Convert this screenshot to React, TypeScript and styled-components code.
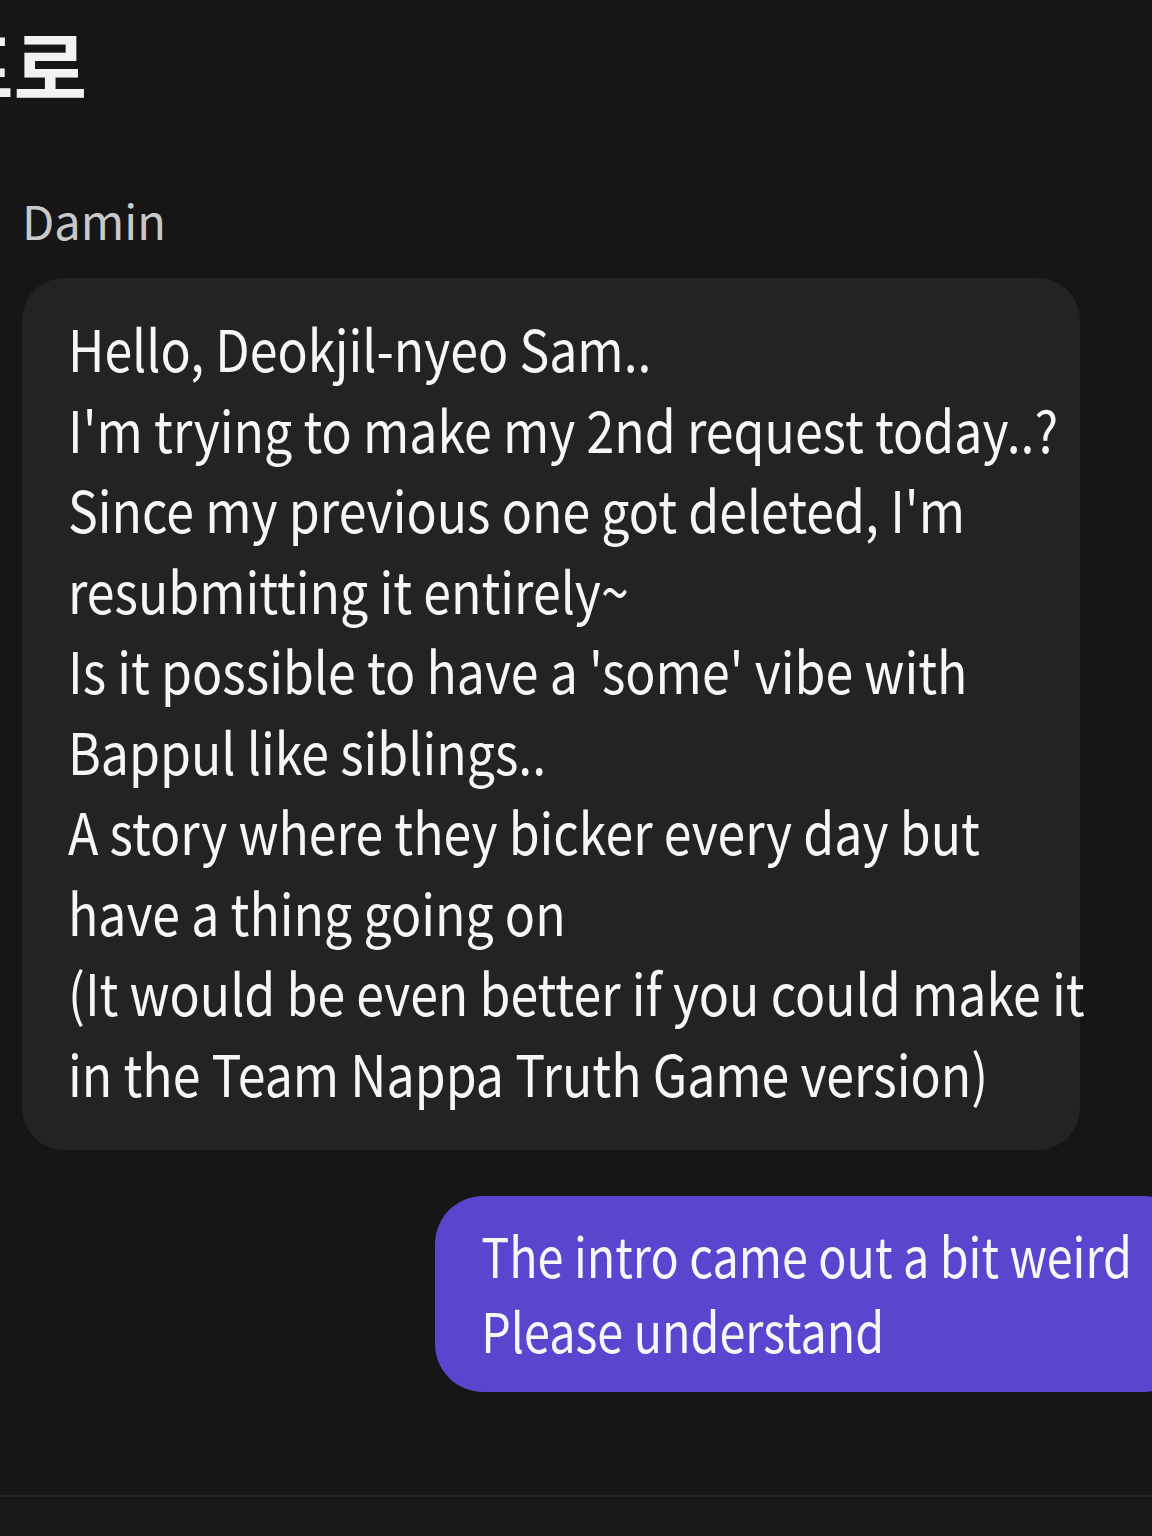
import { createGlobalStyle } from "styled-components";
import styled from "styled-components";

const GlobalStyle = createGlobalStyle`
  html, body {
    margin: 0;
    padding: 0;
    background: #161616;
  }
  body {
    font-family: "Noto Sans CJK KR", "Noto Sans", sans-serif;
    overflow: hidden;
  }
`;

type BubbleTone = "received" | "sent";

const receivedLines = [
  "Hello, Deokjil-nyeo Sam..",
  "I'm trying to make my 2nd request today..?",
  "Since my previous one got deleted, I'm",
  "resubmitting it entirely~",
  "Is it possible to have a 'some' vibe with",
  "Bappul like siblings..",
  "A story where they bicker every day but",
  "have a thing going on",
  "(It would be even better if you could make it",
  "in the Team Nappa Truth Game version)",
];

const sentLines = ["The intro came out a bit weird", "Please understand"];

const App = () => (
  <>
    <GlobalStyle />
    <Page>
      <Header>
        <Title>프로</Title>
      </Header>
      <Thread>
        <SenderName>Damin</SenderName>
        <Row $tone="received">
          <Bubble $tone="received">
            {receivedLines.map(line => (
              <Line
                key={line}
                $tone="received"
              >
                {line}
              </Line>
            ))}
          </Bubble>
        </Row>
        <Row $tone="sent">
          <Bubble $tone="sent">
            {sentLines.map(line => (
              <Line
                key={line}
                $tone="sent"
              >
                {line}
              </Line>
            ))}
          </Bubble>
        </Row>
      </Thread>
      <Composer />
    </Page>
  </>
);

const Page = styled.div`
  display: flex;
  flex-direction: column;
  width: 1152px;
  height: 1536px;
  overflow: hidden;
  background: #161616;
  color: #f4f4f4;
`;

const Header = styled.header`
  display: flex;
  height: 130px;
  padding-top: 15px;
  box-sizing: border-box;
`;

// the screen title is scrolled half out of view on the left
const Title = styled.h1`
  margin: 0 0 0 -60px;
  font-size: 80px;
  font-weight: 700;
  line-height: 1.2;
  color: #f2f2f2;
  white-space: nowrap;
`;

const Thread = styled.main`
  display: flex;
  flex-direction: column;
  flex: 1;
  padding: 66px 0 0 22px;
`;

const SenderName = styled.div`
  font-size: 47px;
  line-height: 1;
  color: #c9c9c9;
  margin-bottom: 35px;
`;

const Row = styled.div<{ $tone: BubbleTone }>`
  display: flex;
  justify-content: ${({ $tone }) => ($tone === "sent" ? "flex-end" : "flex-start")};
  margin-right: ${({ $tone }) => ($tone === "sent" ? "-40px" : "0")};
  margin-top: ${({ $tone }) => ($tone === "sent" ? "46px" : "0")};
`;

const Bubble = styled.div<{ $tone: BubbleTone }>`
  display: flex;
  flex-direction: column;
  box-sizing: border-box;
  ${({ $tone }) =>
    $tone === "sent"
      ? `
    background: #5846cf;
    border-radius: 48px;
    padding: 21px 60px 25px 46px;
  `
      : `
    width: 1058px;
    background: #232323;
    border-radius: 42px;
    padding: 29px 40px 38px 46px;
  `}
`;

const Line = styled.span<{ $tone: BubbleTone }>`
  display: block;
  font-size: ${({ $tone }) => ($tone === "sent" ? "46.7px" : "50px")};
  line-height: ${({ $tone }) => ($tone === "sent" ? "75px" : "80.5px")};
  white-space: nowrap;
  color: #f6f6f6;
  transform: scaleY(${({ $tone }) => ($tone === "sent" ? 1.17 : 1.145)});
`;

const Composer = styled.footer`
  height: 39px;
  border-top: 2px solid #262626;
  background: #181818;
`;

export default App;
